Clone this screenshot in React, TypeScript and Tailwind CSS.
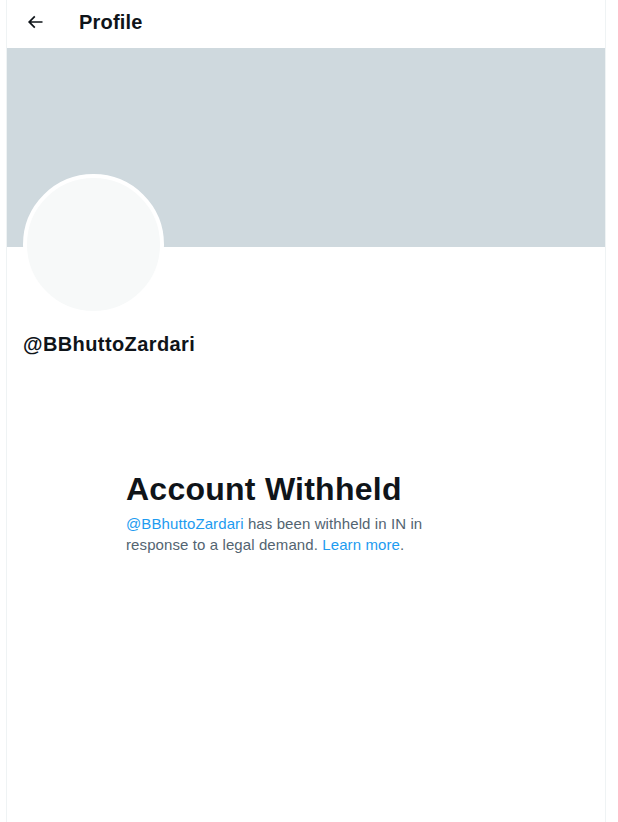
import React from "react";

export default function App() {
  const font = { fontFamily: '"Liberation Sans", Arial, sans-serif' };
  return (
    <div className="w-[618px] h-[822px] bg-white overflow-hidden" style={font}>
      <div className="ml-[6px] w-[600px] h-[822px] border-x border-[#eff3f4] flex flex-col">
        <div className="h-[48px] flex items-center pb-[4px] shrink-0">
          <div className="w-[56px] pl-[18px] flex items-center">
            <svg viewBox="0 0 24 24" width="20" height="20" fill="#0f1419">
              <path d="M7.414 13l5.043 5.04-1.414 1.42L3.586 12l7.457-7.46 1.414 1.42L7.414 11H21v2H7.414z" />
            </svg>
          </div>
          <div className="pl-[16px] text-[20px] font-bold text-[#0f1419] leading-[24px] tracking-[0.2px]">Profile</div>
        </div>
        <div className="h-[199px] bg-[#cfd9de] shrink-0" />
        <div className="px-[16px]">
          <div className="-mt-[73px] w-[141px] h-[141px] rounded-full border-4 border-white bg-[#f7f9f9]" />
          <div className="mt-[17px] text-[20px] font-bold text-[#0f1419] leading-[24px] tracking-[0.4px]">@BBhuttoZardari</div>
        </div>
        <div className="mt-[115px] pl-[119px] pr-[100px]">
          <div className="text-[32px] font-bold text-[#0f1419] leading-[36px] tracking-[0.25px]">Account Withheld</div>
          <div className="mt-[6px] text-[15px] text-[#536471] leading-[21px] w-[320px] tracking-[0.1px]">
            <span className="text-[#1d9bf0]">@BBhuttoZardari</span> has been withheld in IN in response to a legal demand.{" "}
            <span className="text-[#1d9bf0]">Learn more</span>.
          </div>
        </div>
      </div>
    </div>
  );
}
